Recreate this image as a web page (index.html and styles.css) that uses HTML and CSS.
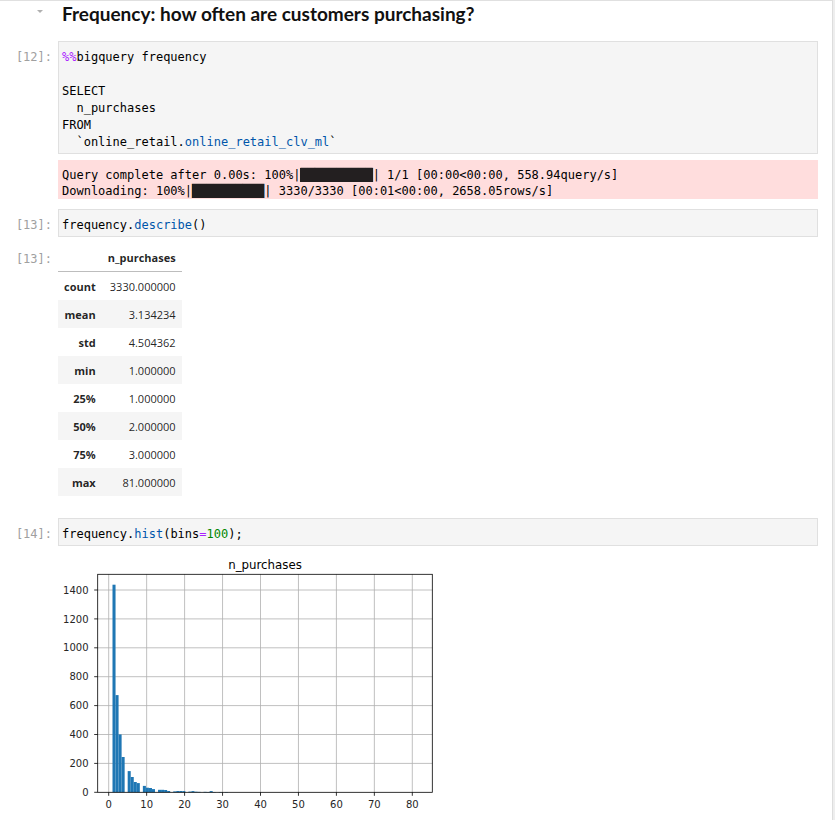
FILE: index.html
```html
<!DOCTYPE html>
<html>
<head>
<meta charset="utf-8">
<link rel="stylesheet" href="styles.css">
</head>
<body>
<div class="page">
  <div class="row md">
    <div class="prompt"><span class="caret"></span></div>
    <h2 class="heading">Frequency: how often are customers purchasing?</h2>
  </div>

  <div class="row cell c12">
    <div class="prompt">[12]:</div>
    <pre class="input"><span class="magic">%%</span>bigquery frequency

SELECT
  n_purchases
FROM
  `online_retail.<span class="prop">online_retail_clv_ml</span>`</pre>
  </div>

  <div class="row out-err">
    <div class="prompt"></div>
    <pre class="stderr">Query complete after 0.00s: 100%|<span class="bar">██████████</span>| 1/1 [00:00&lt;00:00, 558.94query/s]
Downloading: 100%|<span class="bar">██████████</span>| 3330/3330 [00:01&lt;00:00, 2658.05rows/s]</pre>
  </div>

  <div class="row cell c13">
    <div class="prompt">[13]:</div>
    <pre class="input">frequency.<span class="prop">describe</span>()</pre>
  </div>

  <div class="row out-table">
    <div class="prompt oprompt">[13]:</div>
    <table class="df">
      <thead>
        <tr><th></th><th>n_purchases</th></tr>
      </thead>
      <tbody>
        <tr><th>count</th><td>3330.000000</td></tr>
        <tr><th>mean</th><td>3.134234</td></tr>
        <tr><th>std</th><td>4.504362</td></tr>
        <tr><th>min</th><td>1.000000</td></tr>
        <tr><th>25%</th><td>1.000000</td></tr>
        <tr><th>50%</th><td>2.000000</td></tr>
        <tr><th>75%</th><td>3.000000</td></tr>
        <tr><th>max</th><td>81.000000</td></tr>
      </tbody>
    </table>
  </div>

  <div class="row cell c14">
    <div class="prompt">[14]:</div>
    <pre class="input">frequency.<span class="prop">hist</span>(bins<span class="op">=</span><span class="num">100</span>);</pre>
  </div>

  <div class="row out-chart">
    <svg class="chart" width="390" height="270" viewBox="58 550 390 270" xmlns="http://www.w3.org/2000/svg">
      <g class="grid" stroke="#b0b0b0" stroke-width="0.8">
        <line x1="108.7" y1="574.3" x2="108.7" y2="792.3"/>
        <line x1="146.65" y1="574.3" x2="146.65" y2="792.3"/>
        <line x1="184.6" y1="574.3" x2="184.6" y2="792.3"/>
        <line x1="222.55" y1="574.3" x2="222.55" y2="792.3"/>
        <line x1="260.5" y1="574.3" x2="260.5" y2="792.3"/>
        <line x1="298.45" y1="574.3" x2="298.45" y2="792.3"/>
        <line x1="336.4" y1="574.3" x2="336.4" y2="792.3"/>
        <line x1="374.35" y1="574.3" x2="374.35" y2="792.3"/>
        <line x1="412.3" y1="574.3" x2="412.3" y2="792.3"/>
        <line x1="97.7" y1="763.4" x2="432.3" y2="763.4"/>
        <line x1="97.7" y1="734.5" x2="432.3" y2="734.5"/>
        <line x1="97.7" y1="705.6" x2="432.3" y2="705.6"/>
        <line x1="97.7" y1="676.7" x2="432.3" y2="676.7"/>
        <line x1="97.7" y1="647.8" x2="432.3" y2="647.8"/>
        <line x1="97.7" y1="618.9" x2="432.3" y2="618.9"/>
        <line x1="97.7" y1="590.0" x2="432.3" y2="590.0"/>
      </g>
      <g class="bars" fill="#1f77b4">
        <rect x="112.50" y="584.7" width="3.04" height="207.6"/>
        <rect x="115.53" y="695.1" width="3.04" height="97.2"/>
        <rect x="118.57" y="734.4" width="3.04" height="57.9"/>
        <rect x="121.60" y="757.0" width="3.04" height="35.3"/>
        <rect x="127.68" y="771.1" width="3.04" height="21.2"/>
        <rect x="130.71" y="777.0" width="3.04" height="15.3"/>
        <rect x="133.75" y="782.0" width="3.04" height="10.3"/>
        <rect x="136.78" y="783.1" width="3.04" height="9.2"/>
        <rect x="142.86" y="785.9" width="3.04" height="6.4"/>
        <rect x="145.89" y="787.7" width="3.04" height="4.6"/>
        <rect x="148.93" y="788.0" width="3.04" height="4.3"/>
        <rect x="151.96" y="789.1" width="3.04" height="3.2"/>
        <rect x="158.04" y="789.8" width="3.04" height="2.5"/>
        <rect x="161.07" y="789.8" width="3.04" height="2.5"/>
        <rect x="164.11" y="790.0" width="3.04" height="2.3"/>
        <rect x="167.14" y="791.0" width="3.04" height="1.3"/>
        <rect x="173.22" y="791.4" width="3.04" height="0.9"/>
        <rect x="176.25" y="791.0" width="3.04" height="1.3"/>
        <rect x="179.29" y="791.0" width="3.04" height="1.3"/>
        <rect x="182.32" y="791.1" width="3.04" height="1.2"/>
        <rect x="188.40" y="791.6" width="3.04" height="0.7"/>
        <rect x="191.43" y="791.1" width="3.04" height="1.2"/>
        <rect x="194.47" y="791.7" width="3.04" height="0.6"/>
        <rect x="197.50" y="791.85" width="3.04" height="0.45"/>
        <rect x="203.58" y="791.85" width="3.04" height="0.45"/>
        <rect x="206.61" y="792.0" width="3.04" height="0.3"/>
        <rect x="209.65" y="791.1" width="3.04" height="1.2"/>
        <rect x="212.68" y="792.0" width="3.04" height="0.3"/>
        <rect x="218.76" y="792.0" width="3.04" height="0.3"/>
        <rect x="224.83" y="792.0" width="3.04" height="0.3"/>
      </g>
      <rect x="97.7" y="574.3" width="334.6" height="218" fill="none" stroke="#000" stroke-width="0.8"/>
      <g class="ticks" stroke="#000" stroke-width="0.8">
        <line x1="94.2" y1="792.3" x2="97.7" y2="792.3"/>
        <line x1="94.2" y1="763.4" x2="97.7" y2="763.4"/>
        <line x1="94.2" y1="734.5" x2="97.7" y2="734.5"/>
        <line x1="94.2" y1="705.6" x2="97.7" y2="705.6"/>
        <line x1="94.2" y1="676.7" x2="97.7" y2="676.7"/>
        <line x1="94.2" y1="647.8" x2="97.7" y2="647.8"/>
        <line x1="94.2" y1="618.9" x2="97.7" y2="618.9"/>
        <line x1="94.2" y1="590.0" x2="97.7" y2="590.0"/>
        <line x1="108.7" y1="792.3" x2="108.7" y2="795.8"/>
        <line x1="146.65" y1="792.3" x2="146.65" y2="795.8"/>
        <line x1="184.6" y1="792.3" x2="184.6" y2="795.8"/>
        <line x1="222.55" y1="792.3" x2="222.55" y2="795.8"/>
        <line x1="260.5" y1="792.3" x2="260.5" y2="795.8"/>
        <line x1="298.45" y1="792.3" x2="298.45" y2="795.8"/>
        <line x1="336.4" y1="792.3" x2="336.4" y2="795.8"/>
        <line x1="374.35" y1="792.3" x2="374.35" y2="795.8"/>
        <line x1="412.3" y1="792.3" x2="412.3" y2="795.8"/>
      </g>
      <g class="ylabels" text-anchor="end">
        <text x="88.5" y="795.9">0</text>
        <text x="88.5" y="767.0">200</text>
        <text x="88.5" y="738.1">400</text>
        <text x="88.5" y="709.2">600</text>
        <text x="88.5" y="680.3">800</text>
        <text x="88.5" y="651.4">1000</text>
        <text x="88.5" y="622.5">1200</text>
        <text x="88.5" y="593.6">1400</text>
      </g>
      <g class="xlabels" text-anchor="middle">
        <text x="108.7" y="807.7">0</text>
        <text x="146.65" y="807.7">10</text>
        <text x="184.6" y="807.7">20</text>
        <text x="222.55" y="807.7">30</text>
        <text x="260.5" y="807.7">40</text>
        <text x="298.45" y="807.7">50</text>
        <text x="336.4" y="807.7">60</text>
        <text x="374.35" y="807.7">70</text>
        <text x="412.3" y="807.7">80</text>
      </g>
      <text class="ctitle" x="265" y="568.5" text-anchor="middle">n_purchases</text>
    </svg>
  </div>
</div>
</body>
</html>
```

FILE: styles.css
```css
html {
  background: #eeeeee;
}
body {
  margin: 0;
  font-family: "Open Sans", "Noto Sans", sans-serif;
  color: rgba(0, 0, 0, 0.87);
}
.page {
  width: 833px;
  height: 820px;
  box-sizing: border-box;
  background: #ffffff;
  border-top: 1px solid #e0e0e0;
  border-right: 1px solid #dddddd;
  overflow: hidden;
}
.row {
  display: flex;
  align-items: flex-start;
}
.prompt {
  flex: none;
  width: 58px;
  box-sizing: border-box;
  padding-right: 6px;
  text-align: right;
  font: 12px/17px "DejaVu Sans Mono", monospace;
  color: #a0a0a0;
}
.caret {
  display: block;
  width: 0;
  height: 0;
  margin: 9px 0 0 37px;
  border-left: 3.5px solid transparent;
  border-right: 3.5px solid transparent;
  border-top: 3.5px solid #b0b0b0;
}
.heading {
  margin: 0;
  font-family: "Lato", "Open Sans", sans-serif;
  font-size: 19px;
  line-height: 26px;
  font-weight: 700;
  color: #111;
  padding-left: 4px;
}
.cell .prompt {
  padding-top: 8px;
}
.input {
  width: 760px;
  box-sizing: border-box;
  margin: 0;
  background: #f5f5f5;
  border: 1px solid #e0e0e0;
  padding: 7px 3px 2px;
  font: 12px/17px "DejaVu Sans Mono", monospace;
  color: #000;
}
.magic, .op {
  color: #aa22ff;
}
.prop {
  color: #0055aa;
}
.num {
  color: #008800;
}
.c12 {
  margin-top: 14px;
}
.out-err {
  margin-top: 6px;
}
.stderr {
  width: 760px;
  box-sizing: border-box;
  margin: 0;
  background: #ffdddd;
  padding: 7px 4px 0;
  font: 12px/16px "DejaVu Sans Mono", monospace;
  color: #000;
}
.bar {
  color: #231f20;
  background: #231f20;
}
.c13 {
  margin-top: 10px;
}
.out-table {
  margin-top: 6px;
}
.oprompt {
  padding-top: 8px;
}
.df {
  border-collapse: collapse;
  border-spacing: 0;
  font-size: 11px;
  line-height: 16px;
  color: rgba(0, 0, 0, 0.87);
}
.df th, .df td {
  padding: 7px 6px 5px;
  text-align: right;
  white-space: nowrap;
}
.df th {
  font-weight: bold;
}
.df td {
  font-weight: normal;
}
.df thead th {
  border-bottom: 1px solid #bdbdbd;
}
.df tbody tr:nth-child(even) {
  background: #f5f5f5;
}
.c14 {
  margin-top: 22px;
}
.out-chart {
  margin-top: 4px;
  padding-left: 58px;
}
.chart {
  display: block;
}
.chart text {
  font-family: "DejaVu Sans", sans-serif;
  font-size: 10px;
  fill: #262626;
}
.chart .ctitle {
  font-size: 11.8px;
  fill: #000;
}
```
